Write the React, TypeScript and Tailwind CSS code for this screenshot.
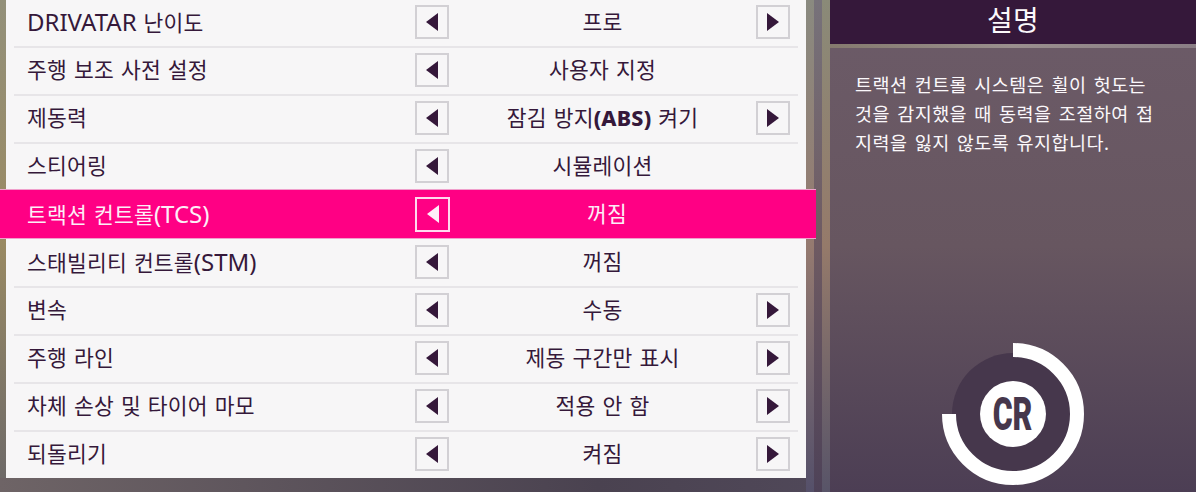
const L = ({ children }: { children: React.ReactNode }) => <span className="text-[24px] tracking-normal">{children}</span>;

const rows: { key: string; label: React.ReactNode; value: React.ReactNode; next: boolean; active?: boolean }[] = [
  { key: "a", label: <><L>DRIVATAR</L> 난이도</>, value: "프로", next: true },
  { key: "b", label: "주행 보조 사전 설정", value: "사용자 지정", next: false },
  { key: "c", label: "제동력", value: <>잠김 방지<b className="font-extrabold">(ABS)</b> 켜기</>, next: true },
  { key: "d", label: "스티어링", value: "시뮬레이션", next: false },
  { key: "e", label: <>트랙션 컨트롤<L>(TCS)</L></>, value: "꺼짐", next: false, active: true },
  { key: "f", label: <>스태빌리티 컨트롤<L>(STM)</L></>, value: "꺼짐", next: false },
  { key: "g", label: "변속", value: "수동", next: true },
  { key: "h", label: "주행 라인", value: "제동 구간만 표시", next: true },
  { key: "i", label: "차체 손상 및 타이어 마모", value: "적용 안 함", next: true },
  { key: "j", label: "되돌리기", value: "켜짐", next: true },
];

function Arrow({ dir, active }: { dir: "l" | "r"; active?: boolean }) {
  return (
    <div
      className={
        active
          ? "flex h-[35px] w-[35px] items-center justify-center border-2 border-[#ffd9ee]"
          : "flex h-[34px] w-[34px] items-center justify-center border-2 border-[#d2d0d4]"
      }
    >
      <svg width="12" height="18" viewBox="0 0 12 18">
        <path d={dir === "l" ? "M12 0V18L0 9Z" : "M0 0V18L12 9Z"} fill={active ? "#ffeef8" : "#35183a"} />
      </svg>
    </div>
  );
}

function Row({ r, last }: { r: (typeof rows)[number]; last: boolean }) {
  if (r.active) {
    return (
      <div className="relative z-10 -ml-[6px] -mt-[3px] mb-px flex h-[50px] w-[816px] items-center border-y border-[#f0a0cc] bg-[#ff0084] text-[#fdeef7]">
        <div className="w-[415px] pb-[1px] pl-[27px]">{r.label}</div>
        <Arrow dir="l" active />
        <div className="w-[316px] pb-[1px] pr-[2px] text-center">{r.value}</div>
      </div>
    );
  }
  return (
    <div className="px-[8px]">
      <div
        className={
          last
            ? "flex h-[46px] items-center pb-[2px]"
            : "flex h-[48px] items-center border-b-2 border-[#e7e5e8] pb-[2px]"
        }
      >
        <div className="w-[401px] pb-[1px] pl-[13px]">{r.label}</div>
        <Arrow dir="l" />
        <div className="w-[307px] pb-[1px] text-center">{r.value}</div>
        {r.next && <Arrow dir="r" />}
      </div>
    </div>
  );
}

export default function App() {
  return (
    <div
      className="flex h-[492px] w-[1196px] overflow-hidden bg-gradient-to-r from-[#6e6466] via-[#4a4250] to-[#5a5268] text-[21.5px] leading-none tracking-[0.2px] text-[#35183a] [word-spacing:1.2px]"
      style={{ fontFamily: '"Noto Sans", "Noto Sans CJK KR", sans-serif' }}
    >
      <div className="h-[478px] w-[6px] shrink-0 bg-gradient-to-b from-[#93907a] via-[#9a8a62] to-[#6e6a68]" />
      <div className="h-[478px] w-[800px] shrink-0 bg-[#f7f6f7]">
        {rows.map((r, i) => (
          <Row key={r.key} r={r} last={i === rows.length - 1} />
        ))}
      </div>
      <div className="w-[8px] shrink-0 bg-gradient-to-b from-[#8a8a80] via-[#957a70] to-[#55506a]" />
      <div className="h-full w-[8px] shrink-0 bg-gradient-to-b from-[#77727a] via-[#6e5a62] to-[#4e4258]" />
      <div className="w-[8px] shrink-0 bg-gradient-to-b from-[#8a8a78] via-[#957a6a] to-[#585468]" />
      <div className="flex h-full w-[366px] shrink-0 flex-col bg-gradient-to-b from-[#6c5b68] via-[#675660] to-[#4c3e54] text-[#fbf8fb]">
        <div className="flex h-[44px] shrink-0 items-center justify-center bg-[#35183a] pb-[4px] text-[28px]">설명</div>
        <div className="h-[4px] shrink-0 bg-gradient-to-r from-[#857a6e] via-[#9a8f8e] to-[#8a7e85]" />
        <div className="pl-[25px] pr-[36px] pt-[22px] text-[18.5px] leading-[29px] tracking-[0.45px] [word-spacing:2px]">
          트랙션 컨트롤 시스템은 휠이 헛도는 것을 감지했을 때 동력을 조절하여 접지력을 잃지 않도록 유지합니다.
        </div>
        <div className="mt-auto flex justify-center pb-[6px]">
          <svg width="144" height="144" viewBox="0 0 144 144">
            <circle cx="72" cy="72" r="61" fill="#46374c" />
            <path d="M72 8 A64 64 0 1 1 8 72" fill="none" stroke="#ffffff" strokeWidth="14" />
            <circle cx="72" cy="72" r="33" fill="#ffffff" />
            <text
              x="0"
              y="0"
              transform="translate(71.5 88) scale(0.66 1)"
              textAnchor="middle"
              fontFamily="Roboto, sans-serif"
              fontWeight="900"
              fontSize="46"
              letterSpacing="0"
              fill="#46374c"
            >
              CR
            </text>
          </svg>
        </div>
      </div>
    </div>
  );
}
